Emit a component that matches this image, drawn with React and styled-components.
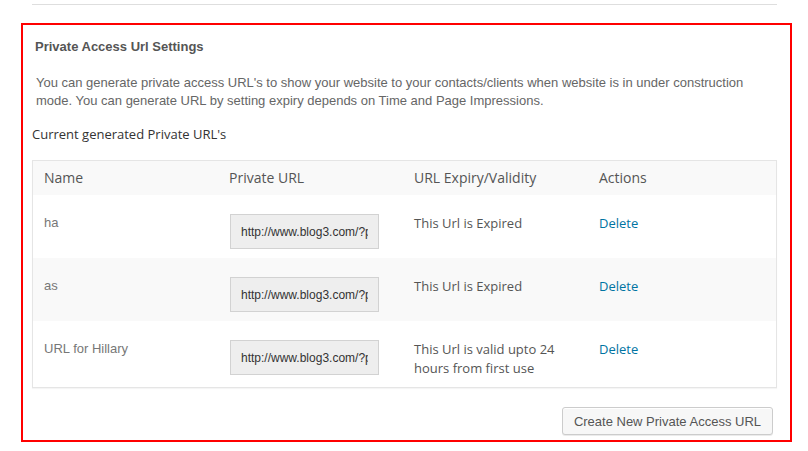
import React from 'react';
import styled, { createGlobalStyle } from 'styled-components';

const GlobalStyle = createGlobalStyle`
  body {
    margin: 0;
    background: #fff;
    font-family: 'Liberation Sans', Arial, sans-serif;
  }
`;

const Page = styled.div`
  padding: 0 16px 0 21px;
`;

const Divider = styled.div`
  height: 4px;
  margin: 0 15px 0 11px;
  border-bottom: 1px solid #dedede;
`;

const Panel = styled.section`
  margin-top: 18px;
  width: 771px;
  box-sizing: border-box;
  border: 2px solid #ff0000;
  padding: 13px 13px 5px 9px;
`;

const Title = styled.h3`
  margin: 0 0 18px;
  padding-left: 3px;
  font-family: 'Liberation Sans', Arial, sans-serif;
  font-size: 13px;
  font-weight: bold;
  line-height: 18px;
  color: #555;
`;

const Intro = styled.p`
  margin: 0 0 15px;
  padding-left: 4px;
  font-size: 13px;
  line-height: 18px;
  color: #666;
`;

const Caption = styled.div`
  margin-bottom: 17px;
  font-family: 'Open Sans', sans-serif;
  font-size: 13px;
  line-height: 18px;
  color: #333;
`;

const Table = styled.table`
  width: 745px;
  table-layout: fixed;
  border-collapse: separate;
  border-spacing: 0;
  border: 1px solid #e5e5e5;
  box-shadow: 0 1px 1px rgba(0, 0, 0, 0.04);
`;

const Th = styled.th`
  padding: 7px 11px;
  text-align: left;
  font-family: 'Open Sans', sans-serif;
  font-size: 14px;
  font-weight: normal;
  line-height: 20px;
  color: #555;
  background: #f9f9f9;
`;

const Row = styled.tr`
  background: ${(p) => (p.$alt ? '#f9f9f9' : '#fff')};
`;

const Td = styled.td`
  padding: 19px 11px 9px;
  vertical-align: top;
  font-family: ${(p) => (p.$plain ? "'Liberation Sans', Arial" : "'Open Sans'")}, sans-serif;
  font-size: 13px;
  line-height: ${(p) => (p.$plain ? '18px' : '19px')};
  color: ${(p) => (p.$plain ? '#777' : '#555')};
`;

const UrlField = styled.input`
  display: block;
  box-sizing: border-box;
  width: 149px;
  height: 35px;
  margin: 0 0 0 1px;
  padding: 0 10px;
  border: 1px solid #d2d2d2;
  background: #eee;
  font-family: 'Liberation Sans', Arial, sans-serif;
  font-size: 12px;
  color: #333;
  outline: none;
`;

const DeleteLink = styled.a`
  color: #0074a2;
  text-decoration: none;
  cursor: pointer;
`;

const Footer = styled.div`
  display: flex;
  justify-content: flex-end;
  margin-top: 19px;
  padding-right: 4px;
`;

const Button = styled.button`
  height: 28px;
  padding: 0 11px;
  border: 1px solid #ccc;
  border-radius: 3px;
  background: #f7f7f7;
  box-shadow: inset 0 1px 0 #fff, 0 1px 0 rgba(0, 0, 0, 0.08);
  font-family: 'Liberation Sans', Arial, sans-serif;
  font-size: 13px;
  color: #555;
  cursor: pointer;
`;

const urls = [
  { name: 'ha', expiry: 'This Url is Expired' },
  { name: 'as', expiry: 'This Url is Expired' },
  { name: 'URL for Hillary', expiry: 'This Url is valid upto 24 hours from first use' },
];

const App = () => {
  return (
    <Page>
      <GlobalStyle />
      <Divider />
      <Panel>
        <Title>Private Access Url Settings</Title>
        <Intro>
          You can generate private access URL's to show your website to your contacts/clients when website is in under construction mode. You can generate URL by setting expiry depends on Time and Page Impressions.
        </Intro>
        <Caption>Current generated Private URL's</Caption>
        <Table>
          <colgroup>
            <col style={{ width: 185 }} />
            <col style={{ width: 185 }} />
            <col style={{ width: 185 }} />
            <col />
          </colgroup>
          <thead>
            <tr>
              <Th>Name</Th>
              <Th>Private URL</Th>
              <Th>URL Expiry/Validity</Th>
              <Th>Actions</Th>
            </tr>
          </thead>
          <tbody>
            {urls.map((u, i) => (
              <Row key={u.name} $alt={i % 2 === 1}>
                <Td $plain>{u.name}</Td>
                <Td>
                  <UrlField readOnly value="http://www.blog3.com/?private_access=1" />
                </Td>
                <Td>{u.expiry}</Td>
                <Td>
                  <DeleteLink>Delete</DeleteLink>
                </Td>
              </Row>
            ))}
          </tbody>
        </Table>
        <Footer>
          <Button>Create New Private Access URL</Button>
        </Footer>
      </Panel>
    </Page>
  );
};

export default App;
